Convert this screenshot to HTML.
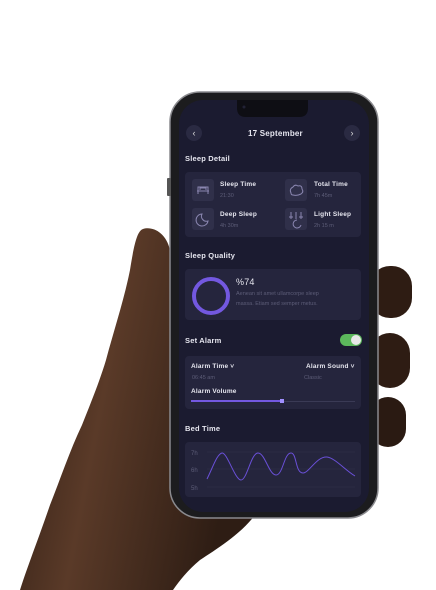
<!DOCTYPE html>
<html><head><style>
*{margin:0;padding:0;box-sizing:border-box}
body{width:436px;height:590px;background:#fff;position:relative;overflow:hidden;font-family:"Liberation Sans",sans-serif}
.a{position:absolute}
.t{position:absolute;color:#e6e6ef;font-size:7.5px;font-weight:bold;white-space:nowrap;letter-spacing:.2px}
.s{position:absolute;color:#5d5d78;font-size:5.5px;white-space:nowrap}
.card{position:absolute;background:#25253d;border-radius:4px}
.ib{position:absolute;width:22px;height:22px;background:#30304a;border-radius:3px}
</style></head><body>
<svg class="a" style="left:0;top:0" width="436" height="590">
<defs>
<linearGradient id="sk" x1="0" y1="0" x2="1" y2="0.3"><stop offset="0" stop-color="#2a1a12"/><stop offset=".45" stop-color="#5a3a28"/><stop offset="1" stop-color="#2e1d14"/></linearGradient>
</defs>
<path d="M143,229 C152,226 166,232 170,250 L172,480 L255,515 C240,535 215,550 200,560 C188,570 180,580 173,590 L20,590 C28,565 38,540 50,505 C60,480 70,450 82,425 C92,400 100,380 106,360 C114,330 124,300 130,270 C134,245 137,231 143,229 Z" fill="url(#sk)"/>
<rect x="370" y="266" width="42" height="52" rx="20" fill="#2e1c13"/>
<rect x="370" y="333" width="40" height="55" rx="20" fill="#2e1c13"/>
<rect x="370" y="397" width="36" height="50" rx="18" fill="#2a1a12"/>
<rect x="170" y="92" width="208" height="426" rx="30" fill="#1c1c1e" stroke="#8a8a8e" stroke-width="1.5"/>
<rect x="167" y="178" width="4" height="18" rx="1" fill="#555"/>
<rect x="179" y="100" width="190" height="412" rx="24" fill="#1b1b30"/>
<path d="M237,100 L308,100 L308,108 Q308,117 299,117 L246,117 Q237,117 237,108 Z" fill="#0e0e14"/>
<circle cx="244" cy="107" r="1.5" fill="#222236"/>
</svg>
<div class="a" style="left:186px;top:125px;width:16px;height:16px;border-radius:50%;background:#2a2a42;color:#ddd;font-size:9px;text-align:center;line-height:16px">‹</div>
<div class="a" style="left:344px;top:125px;width:16px;height:16px;border-radius:50%;background:#2a2a42;color:#ddd;font-size:9px;text-align:center;line-height:16px">›</div>
<div class="t" style="left:248px;top:129px;font-size:8px">17 September</div>
<div class="t" style="left:185px;top:154px">Sleep Detail</div>
<div class="card" style="left:185px;top:172px;width:176px;height:65px"></div>
<div class="ib" style="left:192px;top:179px"></div>
<div class="ib" style="left:192px;top:208px"></div>
<div class="ib" style="left:285px;top:179px"></div>
<div class="ib" style="left:285px;top:208px"></div>
<svg class="a" style="left:192px;top:179px" width="22" height="22"><path d="M6,15 V8 H16 V15 M5,12 H17 M8,11 V9 H14 V11" stroke="#8a86b0" stroke-width="1" fill="none"/></svg>
<svg class="a" style="left:192px;top:208px" width="22" height="22"><path d="M10,6 A6,6 0 1 0 16,13 A5,5 0 0 1 10,6 Z" stroke="#8a86b0" stroke-width="1" fill="none"/></svg>
<svg class="a" style="left:285px;top:179px" width="22" height="22"><path d="M6,14 Q4,10 8,8 Q10,5 13,7 Q17,6 17,10 Q19,13 16,15 Q12,17 8,16 Q6,16 6,14 Z" stroke="#8a86b0" stroke-width="1" fill="none"/></svg>
<svg class="a" style="left:285px;top:208px" width="22" height="22"><path d="M6,4 V11 M11,4 V11 M16,4 V11 M4,9 H8 M14,9 H18 M12,12 A4,4 0 1 0 16,17" stroke="#8a86b0" stroke-width="1" fill="none"/></svg>
<div class="t" style="left:220px;top:181px;font-size:6.5px">Sleep Time</div>
<div class="s" style="left:220px;top:193px">21:30</div>
<div class="t" style="left:220px;top:211px;font-size:6.5px">Deep Sleep</div>
<div class="s" style="left:220px;top:223px">4h 30m</div>
<div class="t" style="left:314px;top:181px;font-size:6.5px">Total Time</div>
<div class="s" style="left:314px;top:193px">7h 45m</div>
<div class="t" style="left:314px;top:211px;font-size:6.5px">Light Sleep</div>
<div class="s" style="left:314px;top:223px">2h 15 m</div>
<div class="t" style="left:185px;top:251px">Sleep Quality</div>
<div class="card" style="left:185px;top:269px;width:176px;height:51px"></div>
<div class="a" style="left:192px;top:277px;width:38px;height:38px;border-radius:50%;border:4px solid #7358e0"></div>
<div class="t" style="left:236px;top:277px;font-size:9px;font-weight:normal">%74</div>
<div class="s" style="left:236px;top:291px">Aenean sit amet ullamcorpe sleep</div>
<div class="s" style="left:236px;top:301px">massa. Etiam sed semper metus.</div>
<div class="t" style="left:185px;top:336px">Set Alarm</div>
<div class="a" style="left:340px;top:334px;width:22px;height:12px;border-radius:6px;background:#5cb85c"></div>
<div class="a" style="left:351px;top:335px;width:10px;height:10px;border-radius:50%;background:#e8e8e8"></div>
<div class="card" style="left:185px;top:356px;width:176px;height:53px"></div>
<div class="t" style="left:191px;top:363px;font-size:6.5px">Alarm Time ˅</div>
<div class="s" style="left:192px;top:375px">06:45 am</div>
<div class="t" style="left:306px;top:363px;font-size:6.5px">Alarm Sound ˅</div>
<div class="s" style="left:304px;top:375px">Classic</div>
<div class="t" style="left:191px;top:388px;font-size:6.5px">Alarm Volume</div>
<div class="a" style="left:191px;top:401px;width:164px;height:1px;background:#3a3a55"></div>
<div class="a" style="left:191px;top:400px;width:91px;height:2px;background:#7358e0"></div>
<div class="a" style="left:280px;top:399px;width:4px;height:4px;background:#a090ff"></div>
<div class="t" style="left:185px;top:424px">Bed Time</div>
<div class="card" style="left:185px;top:442px;width:176px;height:55px"></div>
<svg class="a" style="left:185px;top:442px" width="176" height="55">
<path d="M22,10 H170 M22,27 H170 M22,45 H170" stroke="#303048" stroke-width=".6"/>
<text x="6" y="13" fill="#5d5d78" font-size="6" font-family="Liberation Sans">7h</text>
<text x="6" y="30" fill="#5d5d78" font-size="6" font-family="Liberation Sans">6h</text>
<text x="6" y="48" fill="#5d5d78" font-size="6" font-family="Liberation Sans">5h</text>
<path d="M22,37 C28,25 32,12 37,11 C42,10 50,38 56,38 C62,38 66,11 73,11 C80,11 84,33 91,33 C98,33 99,11 106,11 C112,11 110,31 118,31 C124,31 132,14 142,15 C150,16 160,28 170,34" stroke="#6a50d8" stroke-width="1" fill="none"/>
</svg>
</body></html>
